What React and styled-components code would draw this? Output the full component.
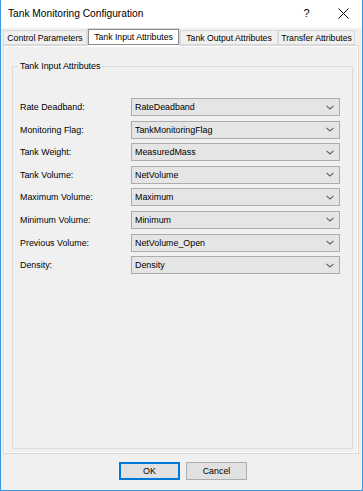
import React from "react"
import styled, { createGlobalStyle } from "styled-components"

const GlobalStyle = createGlobalStyle`
  html, body {
    margin: 0;
    padding: 0;
    background: #ffffff;
  }
  * {
    box-sizing: border-box;
  }
`

const Window = styled.div`
  width: 363px;
  height: 491px;
  display: flex;
  flex-direction: column;
  background: #f0f0f0;
  border: 1px solid #3d97de;
  border-top: none;
  font-family: "Liberation Sans", Arial, sans-serif;
  color: #000;
`

const TitleBar = styled.div`
  height: 28px;
  flex: none;
  display: flex;
  align-items: center;
  background: #ffffff;
  padding-left: 7px;
`

const Title = styled.div`
  flex: 1;
  font-size: 10.2px;
  padding-bottom: 2px;
`

const CaptionButton = styled.div`
  width: 37px;
  height: 28px;
  display: flex;
  align-items: center;
  justify-content: center;
  font-size: 11px;
  padding-bottom: 2px;
`

const TabStrip = styled.div`
  height: 17px;
  flex: none;
  display: flex;
  align-items: flex-end;
  padding-left: 2px;
  position: relative;
  z-index: 1;
`

const Tab = styled.div`
  width: ${(p) => p.$w}px;
  height: ${(p) => (p.$active ? 18 : 15)}px;
  margin-bottom: ${(p) => (p.$active ? -1 : 0)}px;
  display: flex;
  align-items: center;
  justify-content: center;
  background: ${(p) => (p.$active ? "#ffffff" : "#f0f0f0")};
  border: 1px solid #d9d9d9;
  border-bottom: ${(p) => (p.$active ? "none" : "1px solid #d9d9d9")};
  outline: ${(p) => (p.$active ? "1px solid #8a8a8a" : "none")};
  outline-offset: -2px;
  font-size: 8.7px;
  white-space: nowrap;
  padding-bottom: ${(p) => (p.$active ? 2 : 0)}px;
`

const TabPage = styled.div`
  height: 409px;
  flex: none;
  margin: 0 3px 0 2px;
  border: 1px solid #d9d9d9;
  background: #f0f0f0;
  box-shadow: inset 1px 1px 0 #ffffff, inset -1px -1px 0 #ffffff;
  padding: 20px 5px 5px 8px;
`

const GroupBox = styled.div`
  height: 383px;
  border: 1px solid #dcdcdc;
  position: relative;
  padding: 31px 12px 0 7px;
  display: flex;
  flex-direction: column;
  gap: 4.6px;
`

const GroupTitle = styled.span`
  position: absolute;
  top: -7px;
  left: 5px;
  padding: 0 2px;
  background: #f0f0f0;
  font-size: 8.9px;
  line-height: 12px;
`

const Row = styled.div`
  display: flex;
  align-items: center;
  height: 18px;
`

const Label = styled.div`
  width: 111px;
  font-size: 8.9px;
`

const Combo = styled.div`
  width: 209px;
  height: 18px;
  display: flex;
  align-items: center;
  justify-content: space-between;
  border: 1px solid #acacac;
  background: #e5e5e5;
  padding: 0 5px 0 3px;
  font-size: 8.9px;
`

const ButtonRow = styled.div`
  flex: none;
  display: flex;
  gap: 6px;
  padding: 8px 0 0 118px;
`

const Button = styled.div`
  width: 61px;
  height: 18px;
  display: flex;
  align-items: center;
  justify-content: center;
  background: #e1e1e1;
  border: 1px solid ${(p) => (p.$default ? "#0078d7" : "#adadad")};
  box-shadow: ${(p) => (p.$default ? "inset 0 0 0 1px #0078d7" : "none")};
  font-size: 8.9px;
`

const Chevron = () => (
  <svg width="8" height="5" viewBox="0 0 8 5">
    <path d="M0.5 0.8 L4 4 L7.5 0.8" fill="none" stroke="#606060" strokeWidth="1.1" />
  </svg>
)

const CloseIcon = () => (
  <svg width="11" height="11" viewBox="0 0 11 11">
    <path d="M0.5 0.5 L10.5 10.5 M10.5 0.5 L0.5 10.5" stroke="#111" strokeWidth="1" />
  </svg>
)

const tabs = [
  { label: "Control Parameters", w: 84 },
  { label: "Tank Input Attributes", w: 93, active: true },
  { label: "Tank Output Attributes", w: 98 },
  { label: "Transfer Attributes", w: 77 },
]

const fields = [
  ["Rate Deadband:", "RateDeadband"],
  ["Monitoring Flag:", "TankMonitoringFlag"],
  ["Tank Weight:", "MeasuredMass"],
  ["Tank Volume:", "NetVolume"],
  ["Maximum Volume:", "Maximum"],
  ["Minimum Volume:", "Minimum"],
  ["Previous Volume:", "NetVolume_Open"],
  ["Density:", "Density"],
]

export default function App() {
  return (
    <>
      <GlobalStyle />
      <Window>
        <TitleBar>
          <Title>Tank Monitoring Configuration</Title>
          <CaptionButton>?</CaptionButton>
          <CaptionButton>
            <CloseIcon />
          </CaptionButton>
        </TitleBar>
        <TabStrip>
          {tabs.map((t) => (
            <Tab key={t.label} $w={t.w} $active={t.active}>
              {t.label}
            </Tab>
          ))}
        </TabStrip>
        <TabPage>
          <GroupBox>
            <GroupTitle>Tank Input Attributes</GroupTitle>
            {fields.map(([label, value]) => (
              <Row key={label}>
                <Label>{label}</Label>
                <Combo>
                  <span>{value}</span>
                  <Chevron />
                </Combo>
              </Row>
            ))}
          </GroupBox>
        </TabPage>
        <ButtonRow>
          <Button $default>OK</Button>
          <Button>Cancel</Button>
        </ButtonRow>
      </Window>
    </>
  )
}
